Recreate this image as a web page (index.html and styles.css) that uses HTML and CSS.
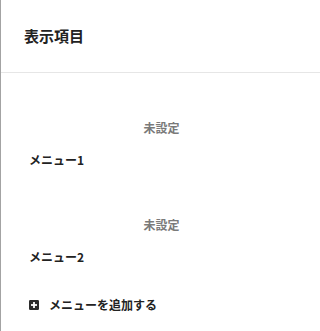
FILE: index.html
```html
<!DOCTYPE html>
<html lang="ja">
<head>
<meta charset="utf-8">
<link rel="stylesheet" href="styles.css">
</head>
<body>
<div class="panel">
  <div class="header"><h2 class="title">表示項目</h2></div>
  <div class="list">
    <div class="item">
      <div class="label">未設定</div>
      <div class="name">メニュー1</div>
    </div>
    <div class="item">
      <div class="label">未設定</div>
      <div class="name">メニュー2</div>
    </div>
    <div class="add">
      <svg class="add-icon" width="10" height="10" viewBox="0 0 10 10" aria-hidden="true">
        <rect x="0" y="0" width="10" height="10" rx="1.2" fill="#2b2b2b"/>
        <rect x="4.1" y="2" width="1.8" height="6" fill="#fff"/>
        <rect x="2" y="4.1" width="6" height="1.8" fill="#fff"/>
      </svg>
      <span class="add-text">メニューを追加する</span>
    </div>
  </div>
</div>
</body>
</html>
```
FILE: styles.css
```css
html, body {
  margin: 0;
  padding: 0;
  background: #fff;
}
body {
  font-family: "Noto Sans CJK JP", "Noto Sans", sans-serif;
  color: #222;
}
.panel {
  height: 331px;
  border-left: 1px solid #a3a3a3;
  box-sizing: border-box;
}
.header {
  height: 72px;
  display: flex;
  align-items: center;
  padding-left: 23px;
  border-bottom: 1px solid #e6e6e6;
}
.title {
  margin: 0;
  font-size: 15px;
  font-weight: 700;
  line-height: 20px;
  color: #222;
}
.list {
  padding-top: 20px;
}
.item {
  display: flex;
  flex-direction: column;
  gap: 12px;
  padding: 25px 0 20px 28px;
}
.label {
  align-self: center;
  margin-left: -26px;
  font-size: 12px;
  font-weight: 700;
  line-height: 20px;
  color: #7a7a7a;
}
.name {
  font-size: 12px;
  font-weight: 700;
  line-height: 20px;
  color: #222;
}
.add {
  display: flex;
  align-items: center;
  gap: 10px;
  margin-top: 8px;
  padding-left: 28px;
  height: 20px;
}
.add-icon {
  display: block;
  flex: none;
}
.add-text {
  font-size: 12px;
  font-weight: 700;
  line-height: 20px;
  color: #222;
}
```
